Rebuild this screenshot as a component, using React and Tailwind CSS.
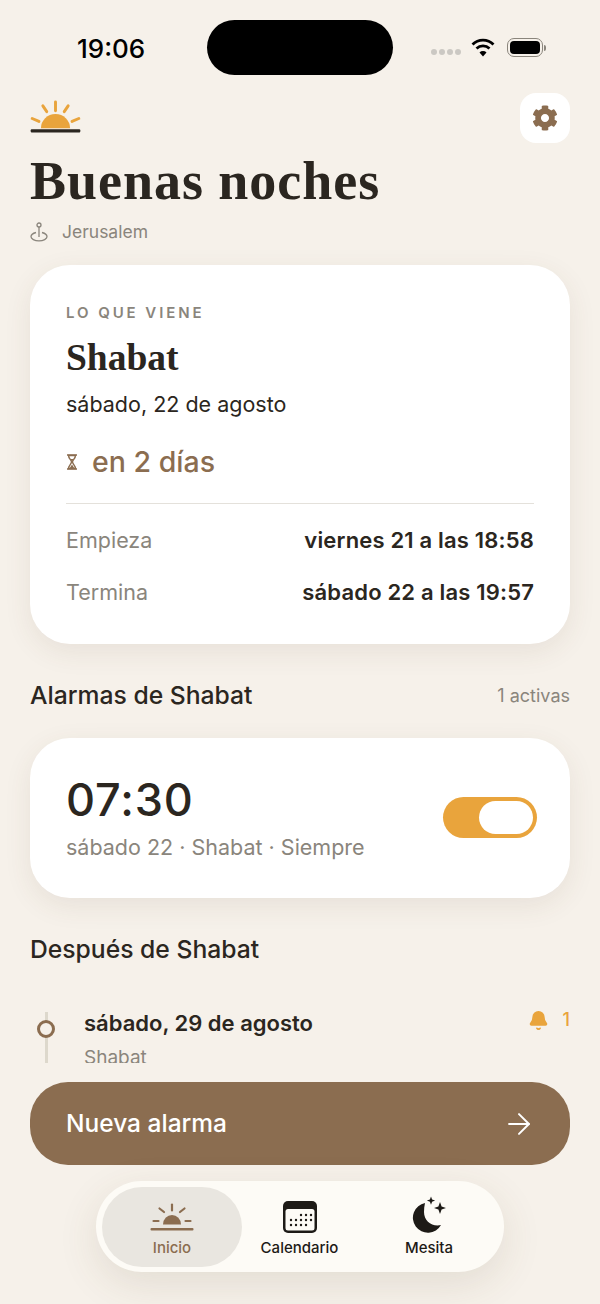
import { FaCog } from 'react-icons/fa';
import { ArrowRight, Bell } from 'lucide-react';

const serif = { fontFamily: '"Liberation Serif", serif' };

function SunIcon({ color = '#e9a43c', base = '#2b2620' }) {
    return (
        <svg width="51" height="35" viewBox="0 0 52 36" fill="none">
            <path d="M11 29a15 14.500 0 0 1 30 0z" fill={color} />
            <g stroke={color} strokeWidth="3" strokeLinecap="round">
                <path d="M26 2v9" />
                <path d="M13 6l4 6" />
                <path d="M39 6l-4 6" />
                <path d="M2 19l7 3" />
                <path d="M50 19l-7 3" />
            </g>
            <rect x="0.500" y="30" width="51" height="3.500" rx="1" fill={base} />
        </svg>
    );
}

function NavSun() {
    return (
        <svg width="44" height="30" viewBox="0 0 44 30" fill="none">
            <path d="M13 21.500a9 9.500 0 0 1 18 0z" fill="#8b6d50" />
            <g stroke="#8b6d50" strokeWidth="2.200" strokeLinecap="round">
                <path d="M22 1.500v6" />
                <path d="M9.500 5.500l4.500 3.500" />
                <path d="M34.500 5.500l-4.500 3.500" />
                <path d="M3.500 18h5" />
                <path d="M35.500 18h5" />
            </g>
            <rect x="0.500" y="25" width="43" height="2.500" rx="1" fill="#8b6d50" />
        </svg>
    );
}

function CalendarIcon() {
    const dots = [
        [18, 14], [23, 14], [28, 14],
        [8, 19], [13, 19], [18, 19], [23, 19], [28, 19],
        [8, 24], [13, 24], [18, 24], [23, 24],
    ];
    return (
        <svg width="34" height="32" viewBox="0 0 34 32">
            <rect x="0" y="0" width="34" height="32" rx="5" fill="#1d1a16" />
            <rect x="2.500" y="8" width="29" height="21.500" rx="2.500" fill="#fdfbf6" />
            {dots.map(([x, y]) => (
                <circle key={`${x}-${y}`} cx={x} cy={y} r="1.200" fill="#1d1a16" />
            ))}
        </svg>
    );
}

function MoonIcon() {
    return (
        <svg width="36" height="37" viewBox="0 0 36 37" fill="#1d1a16">
            <path d="M14 7a15 15 0 1 0 16 22c-9 2-17-4-17-13 0-3 .300-6 1-9z" />
            <path d="M20 0.500l1.100 3 3 1.100-3 1.100-1.100 3-1.100-3-3-1.100 3-1.100z" />
            <path d="M29 6l1.600 4.400 4.400 1.600-4.400 1.600-1.600 4.400-1.600-4.400-4.400-1.600 4.400-1.600z" />
        </svg>
    );
}

function WifiIcon() {
    return (
        <svg width="24" height="19" viewBox="0 0 24 19" fill="none" stroke="#000" strokeWidth="2.800">
            <path d="M1.500 6.500a15 15 0 0 1 21 0" />
            <path d="M5.500 10.500a9.500 9.500 0 0 1 13 0" />
            <path d="M12 18.500l-3.500-4a5 5 0 0 1 7 0z" fill="#000" stroke="none" />
        </svg>
    );
}

function PinIcon() {
    return (
        <svg width="18" height="20" viewBox="0 0 18 20" fill="none" stroke="#8a857c" strokeWidth="1.300">
            <circle cx="9" cy="3" r="2" />
            <path d="M9 5v10" />
            <path d="M6 10.500c-3 .800-5 2.300-5 4.300 0 2 3.500 4 8 4s8-2 8-4c0-2-2-3.500-5-4.300" />
        </svg>
    );
}

function HourglassIcon() {
    return (
        <svg width="12" height="16" viewBox="0 0 12 16" fill="none" stroke="#8b6d50" strokeWidth="1.400">
            <path d="M1 1h10M1 15h10" />
            <path d="M2.500 1.500c0 3 3 4.500 3 6.500s-3 3.500-3 6.500h7c0-3-3-4.500-3-6.500s3-3.500 3-6.500z" />
            <path d="M3.500 14.500l2.500-4 2.500 4zM4 5h4l-2 2.500z" fill="#8b6d50" stroke="none" />
        </svg>
    );
}

function NavItem({ icon, label, active, width }) {
    return (
        <div className={`${width} shrink-0 h-20 flex flex-col items-center justify-end pb-[11px] rounded-[40px] ${active ? 'bg-[#e9e6e0] text-[#8b6d50]' : 'text-[#1d1a16]'}`}>
            <div className="h-9 flex items-end mb-[7px]">{icon}</div>
            <span className="text-[15px] font-medium leading-4">{label}</span>
        </div>
    );
}

export default function App() {
    return (
        <div className="relative w-[600px] h-[1304px] overflow-hidden bg-[#f6f1ea] text-[#2b2620] font-['Inter',sans-serif]">
            {/* Status bar */}
            <div className="h-[93px] pt-5 pl-[77px] pr-[54px] flex justify-between items-start">
                <span className="w-[68px] mt-[13px] text-[26px] leading-[32px] font-medium text-black">19:06</span>
                <div className="w-[186px] h-[55px] ml-[24px] rounded-full bg-black" />
                <div className="flex items-center mt-[18px]">
                    <div className="flex gap-[2px] mr-[10px] mt-2">
                        <span className="w-[6px] h-[6px] rounded-full bg-[#cbc8c3]" />
                        <span className="w-[6px] h-[6px] rounded-full bg-[#cbc8c3]" />
                        <span className="w-[6px] h-[6px] rounded-full bg-[#cbc8c3]" />
                        <span className="w-[6px] h-[6px] rounded-full bg-[#cbc8c3]" />
                    </div>
                    <WifiIcon />
                    <div className="ml-[12px] w-[36px] h-[19px] rounded-[7px] border border-[#8a857c] p-[2px]">
                        <div className="w-full h-full rounded-[4px] bg-black" />
                    </div>
                    <div className="w-[2px] h-[6px] rounded-r-full bg-[#8a857c] ml-[1px]" />
                </div>
            </div>

            {/* Page content, clipped where the button starts */}
            <div className="h-[970px] overflow-hidden px-[30px]">
                <div className="flex justify-between items-start">
                    <div className="mt-[7px]"><SunIcon /></div>
                    <div className="w-[50px] h-[50px] rounded-2xl bg-white flex items-center justify-center text-[#8b6d50]">
                        <FaCog size={26} />
                    </div>
                </div>
                <h1 style={serif} className="mt-[6px] text-[54px] leading-[64px] font-bold tracking-[0.018em] text-[#2b2620]">Buenas noches</h1>
                <div className="mt-[7px] h-6 flex items-center gap-[14px]">
                    <PinIcon />
                    <span className="text-[17.500px] text-[#8a857c]">Jerusalem</span>
                </div>

                {/* Next event */}
                <div className="mt-[21px] h-[379px] rounded-[40px] bg-white px-9 pt-[38px] shadow-[0_8px_28px_rgba(90,70,40,0.09)]">
                    <div className="text-[15px] leading-5 font-semibold tracking-[0.195em] text-[#8a857c]">LO QUE VIENE</div>
                    <div style={serif} className="mt-[13px] text-[37.500px] leading-[44px] font-bold text-[#2b2620]">Shabat</div>
                    <div className="mt-[10px] text-[21.500px] leading-7 text-[#2b2620]">sábado, 22 de agosto</div>
                    <div className="mt-[26px] h-9 flex items-center gap-[14px]">
                        <HourglassIcon />
                        <span className="text-[28.500px] font-medium text-[#8b6d50]">en 2 días</span>
                    </div>
                    <div className="mt-[23px] h-px bg-[#e4e1db]" />
                    <div className="mt-[22px] flex justify-between items-center h-7 text-[21.500px]">
                        <span className="text-[#8a857c]">Empieza</span>
                        <span className="font-semibold text-[22px] tracking-[0.008em]">viernes 21 a las 18:58</span>
                    </div>
                    <div className="mt-6 flex justify-between items-center h-7 text-[21.500px]">
                        <span className="text-[#8a857c]">Termina</span>
                        <span className="font-semibold text-[22px] tracking-[0.008em]">sábado 22 a las 19:57</span>
                    </div>
                </div>

                {/* Alarms */}
                <div className="mt-[37px] h-[30px] flex justify-between items-center">
                    <h2 className="text-[24.700px] font-medium">Alarmas de Shabat</h2>
                    <span className="text-lg text-[#8a857c]">1 activas</span>
                </div>
                <div className="mt-[27px] h-[160px] rounded-[40px] bg-white pl-9 pr-[33px] flex items-center justify-between shadow-[0_8px_28px_rgba(90,70,40,0.09)]">
                    <div>
                        <div className="-mt-[3px] text-[45px] leading-[54px] font-medium tracking-[0.02em]">07:30</div>
                        <div className="mt-[6px] text-[21.500px] leading-7 text-[#8a857c]">sábado 22 · Shabat · Siempre</div>
                    </div>
                    <div className="mb-[2px] w-[94px] h-[41px] rounded-full bg-[#e9a43c] p-[4px] flex justify-end">
                        <div className="w-[54px] h-full rounded-full bg-white" />
                    </div>
                </div>

                <h2 className="mt-[36px] h-[30px] text-[24.700px] leading-[30px] font-medium">Después de Shabat</h2>

                {/* Timeline */}
                <div className="mt-[48px] flex">
                    <div className="relative w-[32px] h-[52px] mr-[22px] flex justify-center">
                        <div className="w-[3px] h-full bg-[#ddd8cc]" />
                        <div className="absolute top-[8px] left-[7px] w-[18px] h-[18px] rounded-full border-[3px] border-[#8b6d50] bg-[#f6f1ea]" />
                    </div>
                    <div className="flex-1 -mt-[3px]">
                        <div className="flex justify-between items-center h-7">
                            <span className="text-[22px] font-semibold">sábado, 29 de agosto</span>
                            <div className="flex items-center gap-[14px] text-[#e9a43c] mb-[6px]">
                                <Bell size={21} fill="#e9a43c" />
                                <span className="text-lg font-medium">1</span>
                            </div>
                        </div>
                        <div className="mt-[9px] text-[19px] leading-6 text-[#8a857c]">Shabat</div>
                    </div>
                </div>
            </div>

            {/* Floating actions */}
            <div className="absolute left-[30px] right-[30px] top-[1082px] h-[83px] rounded-[38px] bg-[#8b6d50] pl-9 pr-[34px] flex items-center justify-between text-white">
                <span className="text-[24.500px] font-medium">Nueva alarma</span>
                <ArrowRight size={34} strokeWidth={1.4} />
            </div>
            <div className="absolute left-[96px] top-[1181px] w-[408px] h-[91px] rounded-full bg-[#fdfbf6] py-[6px] pl-[6px] pr-[3px] flex shadow-[0_12px_40px_rgba(90,70,40,0.12)]">
                <NavItem active width="w-[140px]" label="Inicio" icon={<NavSun />} />
                <NavItem width="w-[115px]" label="Calendario" icon={<CalendarIcon />} />
                <NavItem width="w-[144px]" label="Mesita" icon={<MoonIcon />} />
            </div>
        </div>
    );
}
